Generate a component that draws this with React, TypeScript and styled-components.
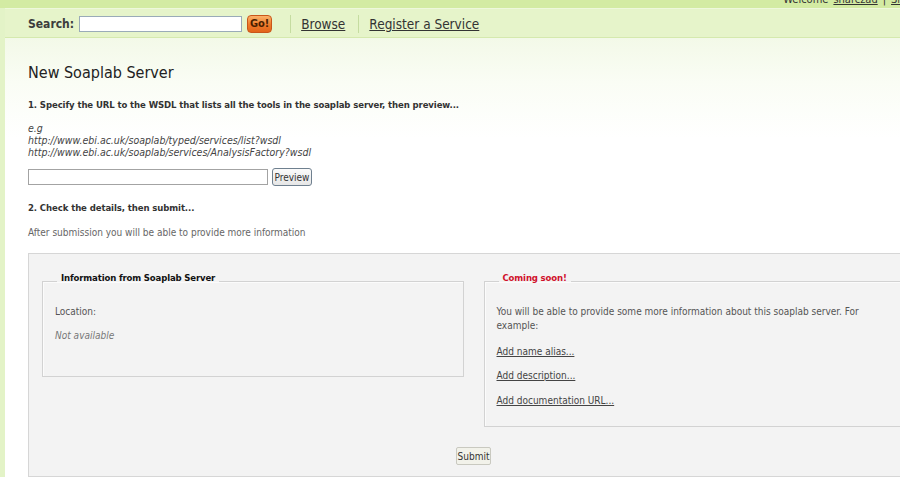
import React from "react";
import styled, { createGlobalStyle } from "styled-components";

const GlobalStyle = createGlobalStyle`
  html, body { margin: 0; padding: 0; overflow: hidden; background: #ffffff; }
  body { font-family: "DejaVu Sans Condensed", "DejaVu Sans", Verdana, sans-serif; color: #333; }
`;

const Page = styled.div`
  width: 942px;
  height: 477px;
  display: flex;
  flex-direction: column;
`;

const TopStrip = styled.div`
  height: 8px;
  flex: none;
  background: #d3eba3;
  display: flex;
  justify-content: flex-end;
  align-items: flex-end;
  overflow: hidden;
  padding-right: 10px;
`;

const UserInfo = styled.div`
  font-size: 11px;
  line-height: 11px;
  margin-bottom: 3px;
  color: #333;
  white-space: nowrap;
  display: flex;
  gap: 5px;
`;

const UserLink = styled.a`
  color: #333;
  text-decoration: underline;
`;

const Shell = styled.div`
  flex: 1;
  display: flex;
  flex-direction: column;
  border-left: 5px solid #e3f3c7;
  min-height: 0;
`;

const NavBar = styled.nav`
  height: 30px;
  box-sizing: border-box;
  flex: none;
  display: flex;
  align-items: center;
  padding: 1px 0 0 23px;
  background: #e6f4ca;
  border-top: 1px solid #eef8dc;
  border-bottom: 1px solid #d5e9ae;
`;

const SearchLabel = styled.label`
  font-size: 12px;
  font-weight: bold;
  color: #3c3c3c;
`;

const SearchInput = styled.input`
  width: 163px;
  height: 16px;
  box-sizing: border-box;
  margin: 0 0 0 5px;
  border: 1px solid #9aabb8;
  background: #fff;
  padding: 0 2px;
`;

const GoButton = styled.button`
  width: 25px;
  height: 18px;
  margin-left: 5px;
  padding: 0;
  border: 1px solid #c9561a;
  border-radius: 4px;
  background: linear-gradient(#fbb26a, #ee7a2a 55%, #e2641a);
  color: #4a1e00;
  font-family: inherit;
  font-size: 11px;
  font-weight: bold;
`;

const NavSep = styled.span<{ $gap: number }>`
  width: 1px;
  height: 18px;
  background: #c5dca0;
  margin-left: ${(p) => p.$gap}px;
`;

const NavLink = styled.a`
  margin-left: 10px;
  font-size: 13.5px;
  color: #333;
  text-decoration: underline;
`;

const Content = styled.main`
  flex: 1;
  padding: 0 23px;
  background: linear-gradient(#f3f9e8 0, #fafdf5 45px, #ffffff 100px);
  display: flex;
  flex-direction: column;
  align-items: flex-start;
`;

const Title = styled.h1`
  margin: 25px 0 0;
  font-size: 16px;
  line-height: 20px;
  font-weight: normal;
  color: #222;
`;

const StepHeading = styled.p<{ $top: number }>`
  margin: ${(p) => p.$top}px 0 0;
  font-size: 9.5px;
  letter-spacing: -0.1px;
  line-height: 14px;
  font-weight: bold;
  color: #333;
`;

const Examples = styled.div`
  margin-top: 10px;
  font-size: 10.5px;
  line-height: 12px;
  font-style: italic;
  color: #444;
`;

const UrlRow = styled.div`
  margin-top: 10px;
  height: 18px;
  display: flex;
  align-items: center;
`;

const UrlInput = styled.input`
  width: 240px;
  height: 16px;
  box-sizing: border-box;
  margin: 0;
  border: 1px solid #a3a3a3;
  background: #fff;
`;

const PreviewButton = styled.button`
  margin-left: 4px;
  width: 40px;
  height: 18px;
  padding: 0;
  border: 1px solid #6f808f;
  border-radius: 3px;
  background: linear-gradient(#fbfbfb, #e6e6e6);
  color: #333;
  font-family: inherit;
  font-size: 10px;
`;

const Note = styled.p`
  margin: 11px 0 0;
  font-size: 10px;
  line-height: 14px;
  color: #666;
`;

const Panel = styled.section`
  margin-top: 13px;
  width: 891px;
  box-sizing: border-box;
  flex: 1;
  border: 1px solid #d6d6d6;
  background: #f3f3f3;
  padding: 17px 13px 0;
  display: flex;
  flex-direction: column;
`;

const PanelRow = styled.div`
  display: flex;
  gap: 20px;
  align-items: flex-start;
`;

const Box = styled.fieldset<{ $pad: number }>`
  margin: 0;
  width: 422px;
  box-sizing: border-box;
  padding: 0 12px ${(p) => p.$pad}px;
  border: 1px solid #d2d2d2;
  box-shadow: inset 1px 1px 0 #fbfbfb;
  display: flex;
  flex-direction: column;
  align-items: flex-start;
`;

const Legend = styled.legend<{ $alert?: boolean }>`
  margin-left: 2px;
  padding: 0 4px 7px;
  font-size: 9.5px;
  letter-spacing: -0.15px;
  line-height: 14px;
  font-weight: bold;
  color: ${(p) => (p.$alert ? "#d0102a" : "#111")};
`;

const BoxText = styled.p<{ $top: number; $muted?: boolean }>`
  margin: ${(p) => p.$top}px 0 0;
  font-size: 10px;
  line-height: 14px;
  color: ${(p) => (p.$muted ? "#777" : "#555")};
  font-style: ${(p) => (p.$muted ? "italic" : "normal")};
`;

const BoxLink = styled.a<{ $top: number }>`
  margin-top: ${(p) => p.$top}px;
  font-size: 10px;
  line-height: 14px;
  color: #444;
  text-decoration: underline;
`;

const SubmitRow = styled.div`
  margin-top: 20px;
  display: flex;
  justify-content: center;
`;

const SubmitButton = styled.button`
  width: 35px;
  height: 18px;
  padding: 0;
  border: 1px solid #c9c9c0;
  border-radius: 2px;
  background: #f2f2ea;
  color: #333;
  font-family: inherit;
  font-size: 10px;
`;

export default function App() {
  return (
    <Page>
      <GlobalStyle />
      <TopStrip>
        <UserInfo>
          <span>Welcome</span>
          <UserLink>sharczad</UserLink>
          <span>|</span>
          <UserLink>Sign out</UserLink>
        </UserInfo>
      </TopStrip>
      <Shell>
        <NavBar>
          <SearchLabel>Search:</SearchLabel>
          <SearchInput type="text" />
          <GoButton>Go!</GoButton>
          <NavSep $gap={18} />
          <NavLink>Browse</NavLink>
          <NavSep $gap={13} />
          <NavLink>Register a Service</NavLink>
        </NavBar>
        <Content>
          <Title>New Soaplab Server</Title>
          <StepHeading $top={15}>
            1. Specify the URL to the WSDL that lists all the tools in the soaplab server, then preview...
          </StepHeading>
          <Examples>
            e.g
            <br />
            http://www.ebi.ac.uk/soaplab/typed/services/list?wsdl
            <br />
            http://www.ebi.ac.uk/soaplab/services/AnalysisFactory?wsdl
          </Examples>
          <UrlRow>
            <UrlInput type="text" />
            <PreviewButton>Preview</PreviewButton>
          </UrlRow>
          <StepHeading $top={15}>2. Check the details, then submit...</StepHeading>
          <Note>After submission you will be able to provide more information</Note>
          <Panel>
            <PanelRow>
              <Box $pad={33}>
                <Legend>Information from Soaplab Server</Legend>
                <BoxText $top={13}>Location:</BoxText>
                <BoxText $top={10} $muted>
                  Not available
                </BoxText>
              </Box>
              <Box $pad={18}>
                <Legend $alert>Coming soon!</Legend>
                <BoxText $top={13}>
                  You will be able to provide some more information about this soaplab server. For example:
                </BoxText>
                <BoxLink $top={12}>Add name alias...</BoxLink>
                <BoxLink $top={10}>Add description...</BoxLink>
                <BoxLink $top={11}>Add documentation URL...</BoxLink>
              </Box>
            </PanelRow>
            <SubmitRow>
              <SubmitButton>Submit</SubmitButton>
            </SubmitRow>
          </Panel>
        </Content>
      </Shell>
    </Page>
  );
}
